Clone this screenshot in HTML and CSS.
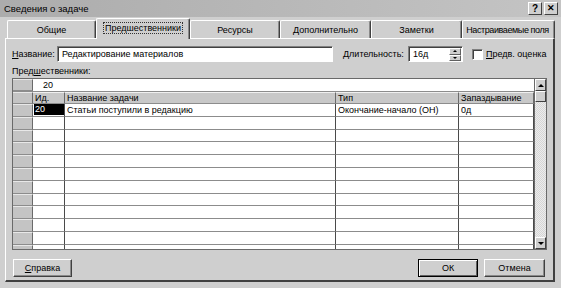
FILE: index.html
```html
<!DOCTYPE html>
<html lang="ru">
<head>
<meta charset="utf-8">
<link rel="stylesheet" href="styles.css">
</head>
<body>
<div class="dialog">
  <div class="titlebar">
    <span class="title">Сведения о задаче</span>
    <span class="tb-btn">?</span>
    <span class="tb-btn x">✕</span>
  </div>
  <div class="tabs">
    <div class="tab w89">Общие</div>
    <div class="tab sel w94"><span class="focus">Предшественники</span></div>
    <div class="tab w90">Ресурсы</div>
    <div class="tab w91">Дополнительно</div>
    <div class="tab w91">Заметки</div>
    <div class="tab w93 tight">Настраиваемые поля</div>
  </div>
  <div class="panel">
    <div class="row1">
      <span class="lbl name-lbl"><u>Н</u>азвание:</span>
      <div class="input name-in">Редактирование материалов</div>
      <span class="lbl dur-lbl"><u>Д</u>лительность:</span>
      <div class="input dur-in">
        <span class="dur-val">16д</span>
        <span class="spin"><span class="sp up"></span><span class="sp down"></span></span>
      </div>
      <span class="check"></span>
      <span class="lbl"><u>П</u>редв. оценка</span>
    </div>
    <div class="pred-lbl">Пред<u>ш</u>ественники:</div>
    <div class="grid">
      <div class="cols">
        <div class="entry">
          <div class="rh"></div>
          <div class="entry-in">20</div>
        </div>
        <div class="hdr">
          <div class="rh"></div>
          <div class="hc c-id">Ид.</div>
          <div class="hc c-name">Название задачи</div>
          <div class="hc c-type">Тип</div>
          <div class="hc c-lag">Запаздывание</div>
        </div>
        <div class="r"><div class="rh"></div><div class="c c-id"><span class="selcell">20</span></div><div class="c c-name">Статьи поступили в редакцию</div><div class="c c-type">Окончание-начало (ОН)</div><div class="c c-lag">0д</div></div>
        <div class="r"><div class="rh"></div><div class="c c-id"></div><div class="c c-name"></div><div class="c c-type"></div><div class="c c-lag"></div></div>
        <div class="r"><div class="rh"></div><div class="c c-id"></div><div class="c c-name"></div><div class="c c-type"></div><div class="c c-lag"></div></div>
        <div class="r"><div class="rh"></div><div class="c c-id"></div><div class="c c-name"></div><div class="c c-type"></div><div class="c c-lag"></div></div>
        <div class="r"><div class="rh"></div><div class="c c-id"></div><div class="c c-name"></div><div class="c c-type"></div><div class="c c-lag"></div></div>
        <div class="r"><div class="rh"></div><div class="c c-id"></div><div class="c c-name"></div><div class="c c-type"></div><div class="c c-lag"></div></div>
        <div class="r"><div class="rh"></div><div class="c c-id"></div><div class="c c-name"></div><div class="c c-type"></div><div class="c c-lag"></div></div>
        <div class="r"><div class="rh"></div><div class="c c-id"></div><div class="c c-name"></div><div class="c c-type"></div><div class="c c-lag"></div></div>
        <div class="r"><div class="rh"></div><div class="c c-id"></div><div class="c c-name"></div><div class="c c-type"></div><div class="c c-lag"></div></div>
        <div class="r"><div class="rh"></div><div class="c c-id"></div><div class="c c-name"></div><div class="c c-type"></div><div class="c c-lag"></div></div>
        <div class="r"><div class="rh"></div><div class="c c-id"></div><div class="c c-name"></div><div class="c c-type"></div><div class="c c-lag"></div></div>
        <div class="r"><div class="rh"></div><div class="c c-id"></div><div class="c c-name"></div><div class="c c-type"></div><div class="c c-lag"></div></div>
      </div>
      <div class="scroll">
        <div class="sb-btn"><span class="arr up"></span></div>
        <div class="thumb"></div>
        <div class="track"></div>
        <div class="sb-btn"><span class="arr down"></span></div>
      </div>
    </div>
    <div class="btns">
      <div class="btn help"><u>С</u>правка</div>
      <div class="spacer"></div>
      <div class="btn ok">ОК</div>
      <div class="btn cancel">Отмена</div>
    </div>
  </div>
</div>
</body>
</html>
```

FILE: styles.css
```css
* { box-sizing: border-box; }
html, body { margin: 0; padding: 0; }
body {
  width: 561px;
  height: 288px;
  overflow: hidden;
  background: #cfcfcf;
}
.dialog {
  width: 561px;
  height: 288px;
  background: #cfcfcf;
  display: flex;
  flex-direction: column;
  font-family: "Liberation Sans", Arial, sans-serif;
  font-size: 9px;
  color: #000;
}
.titlebar {
  height: 17px;
  display: flex;
  align-items: center;
  padding: 0 3px 0 4px;
  background: linear-gradient(to right, #acacac, #c4c4c4);
}
.title { flex: 1; font-size: 9.5px; }
.tb-btn {
  width: 14px;
  height: 13px;
  margin-left: 2px;
  background: #cfcfcf;
  border: 1px solid;
  border-color: #fff #404040 #404040 #fff;
  display: flex;
  align-items: center;
  justify-content: center;
  font-weight: bold;
  font-size: 10px;
  line-height: 1;
}
.tb-btn.x { font-size: 9px; }

.tabs {
  height: 21px;
  display: flex;
  align-items: flex-end;
  padding-left: 7px;
  position: relative;
  z-index: 1;
}
.tab {
  height: 18px;
  border-top: 1px solid #fff;
  border-left: 1px solid #fff;
  border-right: 1px solid #404040;
  border-radius: 2px 2px 0 0;
  box-shadow: inset -1px 0 #8a8a8a;
  display: flex;
  align-items: center;
  justify-content: center;
  background: #cfcfcf;
  white-space: nowrap;
  overflow: hidden;
}
.tab.tight { letter-spacing: -0.4px; padding-right: 2px; }
.tab.sel {
  height: 21px;
  margin-bottom: -1px;
  padding-bottom: 2px;
}
.focus { outline: 1px dotted #333; outline-offset: 0; padding: 0 1px; }
.w89 { width: 89px; }
.w90 { width: 90px; }
.w91 { width: 91px; }
.w93 { width: 93px; }
.w94 { width: 94px; }

.panel {
  margin-left: 5px;
  width: 550px;
  height: 244px;
  border-top: 1px solid #fff;
  border-left: 1px solid #fff;
  border-right: 2px solid #404040;
  border-bottom: 2px solid #404040;
  padding: 0 6px;
  display: flex;
  flex-direction: column;
}
.row1 {
  margin-top: 7px;
  height: 16px;
  display: flex;
  align-items: center;
}
.lbl { white-space: nowrap; }
.name-lbl { width: 45px; flex: none; }
.input {
  height: 16px;
  background: #fff;
  border: 1px solid;
  border-color: #808080 #fff #fff #808080;
  box-shadow: inset 1px 1px #404040;
  display: flex;
  align-items: center;
  padding-left: 4px;
  flex: none;
}
.name-in { width: 276px; }
.dur-lbl { margin-left: 10px; width: 65px; flex: none; }
.dur-in { width: 55px; padding-right: 1px; }
.dur-val { flex: 1; }
.spin { width: 12px; height: 13px; display: flex; flex-direction: column; margin-top: 1px; }
.sp {
  flex: 1;
  background: #cfcfcf;
  border: 1px solid;
  border-color: #fff #606060 #606060 #fff;
  display: flex;
  align-items: center;
  justify-content: center;
}
.sp::after {
  content: "";
  border-left: 2px solid transparent;
  border-right: 2px solid transparent;
}
.sp.up::after { border-bottom: 2px solid #000; }
.sp.down::after { border-top: 2px solid #000; }
.check {
  width: 11px;
  height: 11px;
  flex: none;
  margin-left: 9px;
  margin-right: 3px;
  background: #fff;
  border: 1px solid;
  border-color: #808080 #fff #fff #808080;
  box-shadow: inset 1px 1px #404040;
}
.pred-lbl {
  margin-top: 3px;
  height: 13px;
  line-height: 12px;
}
.grid {
  height: 172px;
  width: 535px;
  border: 1px solid #6a6a6a;
  display: flex;
  overflow: hidden;
  background: #fff;
}
.cols { width: 521px; overflow: hidden; display: flex; flex-direction: column; }
.rh {
  width: 20px;
  flex: none;
  background: #c4c4c4;
  border-top: 1px solid #e8e8e8;
  border-bottom: 1px solid #8c8c8c;
  border-right: 1px solid #6a6a6a;
}
.entry { height: 13px; display: flex; flex: none; border-bottom: 1px solid #8c8c8c; }
.entry-in { flex: 1; padding-left: 10px; line-height: 12px; background: #fff; }
.hdr { height: 12px; display: flex; flex: none; }
.hc {
  background: #c8c8c8;
  border-top: 1px solid #f0f0f0;
  border-bottom: 1px solid #8c8c8c;
  border-right: 1px solid #6a6a6a;
  padding-left: 2px;
  line-height: 10px;
  white-space: nowrap;
  overflow: hidden;
}
.c-id { width: 32px; }
.c-name { width: 271px; }
.c-type { width: 123px; }
.c-lag { width: 75px; }
.r { height: 12.8px; display: flex; flex: none; }
.c {
  border-bottom: 1px solid #8c8c8c;
  border-right: 1px solid #4a4a4a;
  padding-left: 2px;
  line-height: 12px;
  white-space: nowrap;
  overflow: hidden;
}
.c.c-id { padding: 0 0 1px 1px; display: flex; }
.selcell {
  flex: 1;
  background: #000;
  color: #fff;
  padding-left: 1px;
  line-height: 11px;
}
.scroll {
  width: 12px;
  display: flex;
  flex-direction: column;
  background: #cfcfcf;
  border-left: 1px solid #6a6a6a;
}
.sb-btn {
  height: 12px;
  flex: none;
  background: #cfcfcf;
  border: 1px solid;
  border-color: #fff #404040 #404040 #fff;
  display: flex;
  align-items: center;
  justify-content: center;
}
.thumb {
  height: 11px;
  flex: none;
  background: #cfcfcf;
  border: 1px solid;
  border-color: #fff #404040 #404040 #fff;
}
.track {
  flex: 1;
  background-color: #e6e6e6;
  background-image: repeating-conic-gradient(#d6d6d6 0 25%, #ececec 0 50%);
  background-size: 2px 2px;
}
.arr {
  border-left: 3px solid transparent;
  border-right: 3px solid transparent;
}
.arr.up { border-bottom: 3px solid #000; }
.arr.down { border-top: 3px solid #000; }

.btns {
  margin-top: 9px;
  height: 18px;
  display: flex;
}
.spacer { flex: 1; }
.btn {
  height: 18px;
  background: #cfcfcf;
  border: 1px solid;
  border-color: #fff #404040 #404040 #fff;
  box-shadow: inset -1px -1px #8a8a8a;
  display: flex;
  align-items: center;
  justify-content: center;
}
.help { width: 59px; margin-left: 1px; }
.ok { width: 60px; border: 1px solid #000; box-shadow: inset 1px 1px #fff, inset -1px -1px #606060; }
.cancel { width: 61px; margin-left: 6px; margin-right: 2px; }
```
